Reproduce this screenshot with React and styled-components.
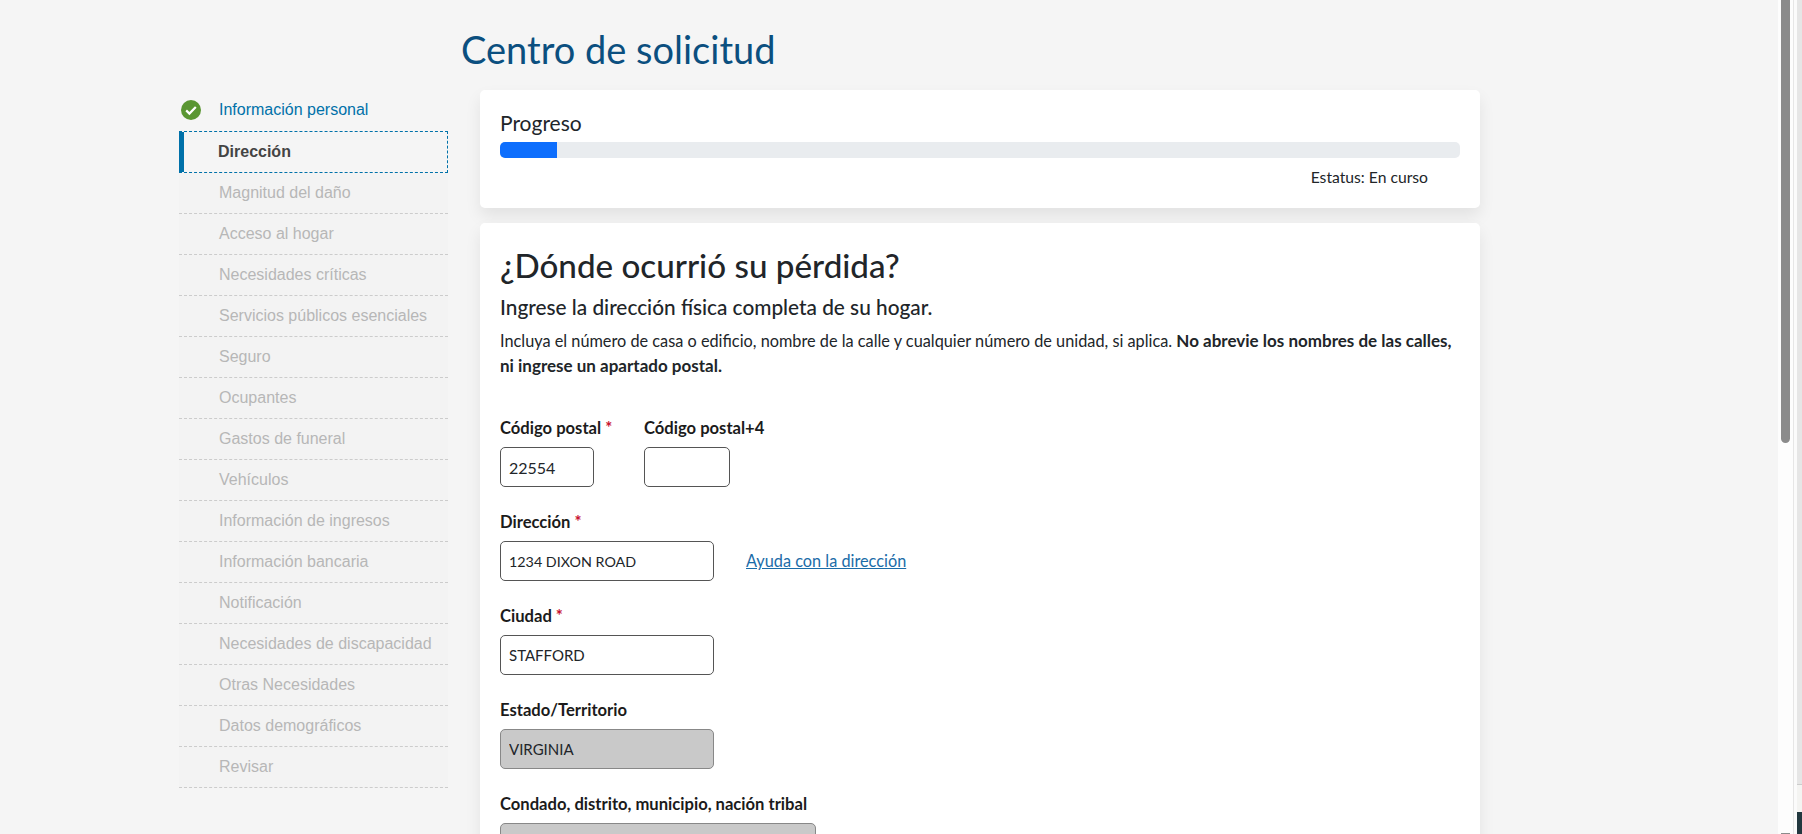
import React from "react";
import styled, { createGlobalStyle } from "styled-components";

const Global = createGlobalStyle`
  html, body { margin: 0; padding: 0; height: 100%; overflow: hidden; background: #f5f5f5; }
  * { box-sizing: border-box; }
`;
const Shell = styled.div`display: flex; width: 1802px; height: 834px; overflow: hidden; background: #f5f5f5;`;
const Viewport = styled.div`flex: 1; min-width: 0; height: 834px; overflow: hidden; display: flex; padding-left: 179px; font-family: Lato, "Noto Sans", sans-serif; color: #212529;`;
const Sidebar = styled.nav`width: 269px; flex: none; margin-top: 90px; font-family: "Liberation Sans", Arial, sans-serif; font-size: 16px;`;
const Done = styled.div`height: 41px; display: flex; align-items: center; gap: 18px; padding: 0 0 2px 2px; color: #0071a9; svg { flex: none; }`;
const Current = styled.div`height: 42px; display: flex; align-items: center; padding-left: 34px; color: #444; font-weight: 700; font-size: 16px; border: 1px dashed #0071a9; border-left: 5px solid #0071a9;`;
const Step = styled.div`height: 41px; display: flex; align-items: center; padding-left: 40px; padding-bottom: 1px; color: #b7b7b7; background: #f3f3f3; border-bottom: 1px dashed #ccc;`;
const Main = styled.main`width: 1021px; flex: none; margin-left: 13px;`;
const Title = styled.h1`height: 90px; margin: 0; padding: 24px 0 0 0; font-size: 38px; line-height: 50px; font-weight: 400; color: #0b4f7f;`;
const Card = styled.section`margin: 0 0 15px 19px; width: 1000px; background: #fff; border-radius: 5px; box-shadow: 0 8px 16px rgba(0,0,0,.08); padding: 20px;`;
const ProgressCard = styled(Card)`height: 118px;`;
const ProgressLabel = styled.div`font-size: 21px; line-height: 26px; margin-bottom: -2px; color: #212529;`;
const Track = styled.div`height: 16px; margin-top: 8px; background: #e9ecef; border-radius: 5px; overflow: hidden;`;
const Fill = styled.div`height: 100%; background: #0d6efd;`;
const Status = styled.div`font-size: 15.7px; line-height: 24px; text-align: right; margin-top: 7px; padding-right: 32px;`;
const Heading = styled.h2`margin: 0; padding-top: 2px; font-size: 33.2px; line-height: 40px; font-weight: 500; color: #212529;`;
const Sub = styled.h3`margin: 9px 0 0; font-size: 20.8px; line-height: 26px; font-weight: 500; color: #212529;`;
const Body = styled.p`margin: 8px 0 0; font-size: 16.3px; line-height: 25px; color: #212529; b { font-weight: 700; font-size: 17px; }`;
const Form = styled.form`margin-top: 45px; display: flex; flex-direction: column; gap: 30px;`;
const Row = styled.div`display: flex; align-items: flex-start;`;
const Field = styled.div`display: flex; flex-direction: column; width: ${p => (p.$w ? `${p.$w}px` : "auto")};`;
const Label = styled.label`height: 31px; font-size: 16.6px; line-height: 24px; font-weight: 700; color: #1b1b1b; white-space: nowrap; margin-top: -7px; display: block;`;
const Star = styled.span`color: #c8102e; margin-left: 4px;`;
const Input = styled.input`display: block; width: ${p => p.$w}px; height: 40px; padding: 0 8px; font: inherit; font-size: ${p => p.$size || 15}px; color: #212529; background: ${p => p.disabled ? "#c9c9c9" : "#fff"}; border: 1px solid ${p => p.disabled ? "#888" : "#555"}; border-radius: 5px; opacity: 1;`;
const HelpLink = styled.a`font-size: 16.3px; color: #1b6ca8; text-decoration: underline; margin-left: 32px; align-self: center; margin-top: 22px;`;
const ScrollTrack = styled.div`width: 15px; flex: none; height: 834px; background: #fdfdfd; padding: 0 3px; position: relative;`;
const Thumb = styled.div`width: 9px; height: 443px; background: #8b8b8b; border-radius: 0 0 5px 5px;`;
const ThumbNext = styled.div`position: absolute; left: 3px; bottom: 0; width: 9px; height: 1px; background: #8b8b8b;`;
const Gutter = styled.div`width: 4px; flex: none; height: 834px; background: #fbfbfb; border-left: 1px solid #e6e6e6;`;
const EdgePanel = styled.div`width: 5px; flex: none; height: 834px; display: flex; flex-direction: column;`;
const EdgeTop = styled.div`height: 785px; background: #e6e6e6; border-bottom: 1px solid #ccc;`;
const EdgeMid = styled.div`height: 27px; background: #f4f4f2;`;
const EdgeDark = styled.div`flex: 1; background: #22383f;`;

const steps = ["Magnitud del daño","Acceso al hogar","Necesidades críticas","Servicios públicos esenciales","Seguro","Ocupantes","Gastos de funeral","Vehículos","Información de ingresos","Información bancaria","Notificación","Necesidades de discapacidad","Otras Necesidades","Datos demográficos","Revisar"];

const Check = () => (
  <svg width="20" height="20" viewBox="0 0 20 20" aria-hidden="true">
    <circle cx="10" cy="10" r="10" fill="#5a9632" />
    <path d="M5.2 10.4l3.2 3.2 6.4-6.6" fill="none" stroke="#fff" strokeWidth="2.2" />
  </svg>
);

export default function App() {
  return (
    <Shell>
      <Global />
      <Viewport>
        <Sidebar>
          <Done><Check />Información personal</Done>
          <Current>Dirección</Current>
          {steps.map(s => <Step key={s}>{s}</Step>)}
        </Sidebar>
        <Main>
          <Title>Centro de solicitud</Title>
          <ProgressCard>
            <ProgressLabel>Progreso</ProgressLabel>
            <Track><Fill style={{ width: "5.95%" }} /></Track>
            <Status>Estatus: En curso</Status>
          </ProgressCard>
          <Card>
            <Heading>¿Dónde ocurrió su pérdida?</Heading>
            <Sub>Ingrese la dirección física completa de su hogar.</Sub>
            <Body>Incluya el número de casa o edificio, nombre de la calle y cualquier número de unidad, si aplica. <b>No abrevie los nombres de las calles, ni ingrese un apartado postal.</b></Body>
            <Form>
              <Row>
                <Field $w={144}><Label>Código postal<Star>*</Star></Label><Input $w={94} $size={16} defaultValue="22554" /></Field>
                <Field><Label>Código postal+4</Label><Input $w={86} /></Field>
              </Row>
              <Row>
                <Field><Label>Dirección<Star>*</Star></Label><Input $w={214} $size={14.3} defaultValue="1234 DIXON ROAD" /></Field>
                <HelpLink href="#">Ayuda con la dirección</HelpLink>
              </Row>
              <Field><Label>Ciudad<Star>*</Star></Label><Input $w={214} defaultValue="STAFFORD" /></Field>
              <Field><Label>Estado/Territorio</Label><Input $w={214} disabled defaultValue="VIRGINIA" /></Field>
              <Field><Label>Condado, distrito, municipio, nación tribal</Label><Input $w={316} disabled /></Field>
            </Form>
          </Card>
        </Main>
      </Viewport>
      <ScrollTrack><Thumb /><ThumbNext /></ScrollTrack>
      <Gutter />
      <EdgePanel><EdgeTop /><EdgeMid /><EdgeDark /></EdgePanel>
    </Shell>
  );
}
